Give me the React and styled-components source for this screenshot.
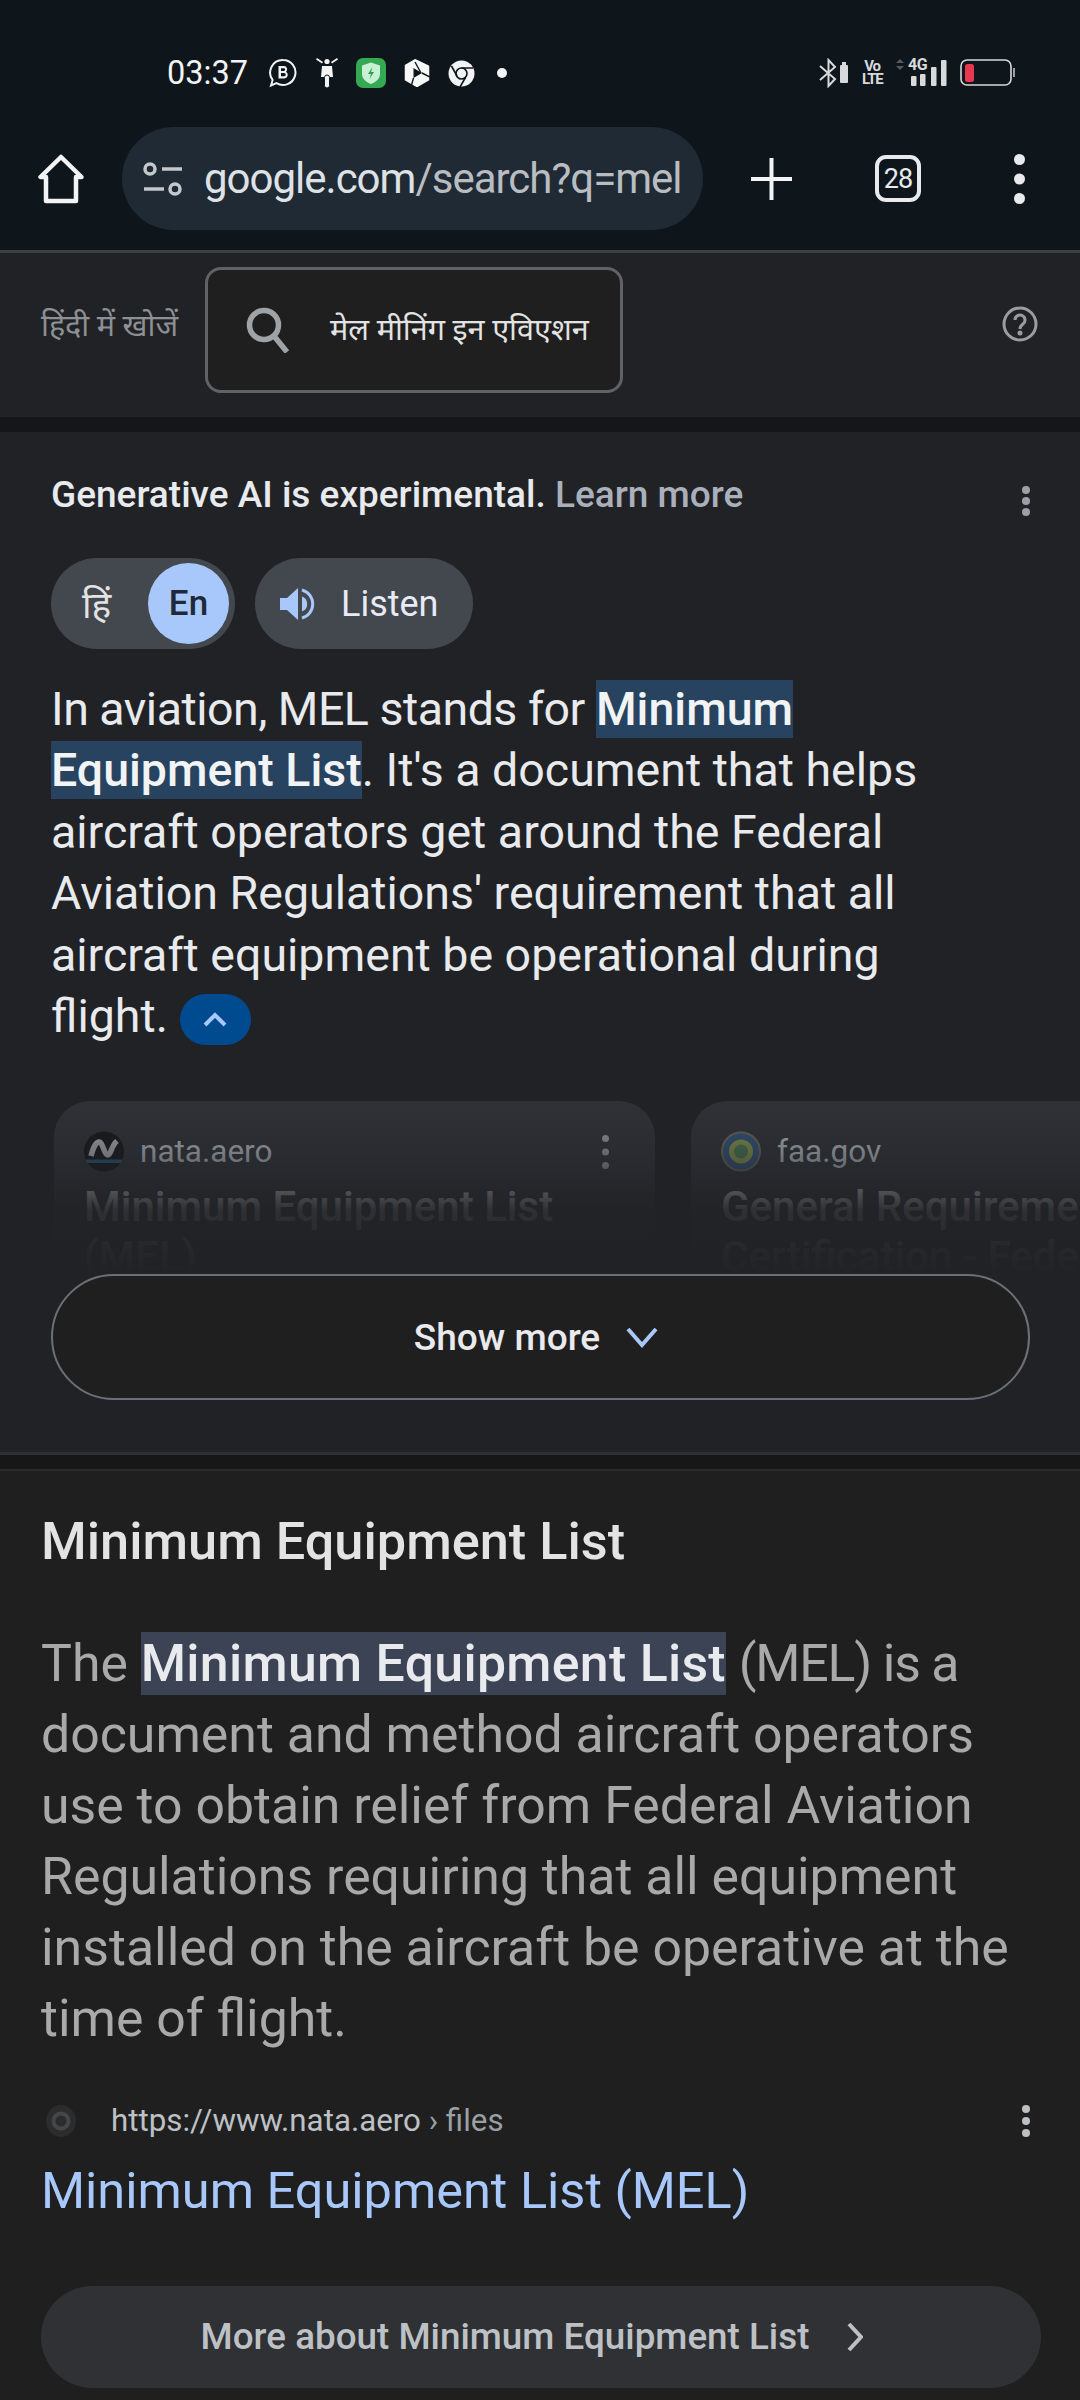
import React from "react";
import styled, { createGlobalStyle } from "styled-components";

const Global = createGlobalStyle`
  html, body { margin: 0; padding: 0; background: #1f1f1f; }
  * { box-sizing: border-box; }
`;
const SANS = `"Roboto", "Noto Sans", sans-serif`;

const Page = styled.div`
  width: 1080px; height: 2400px; overflow: hidden; background: #1f1f1f; font-family: ${SANS};
`;
const Header = styled.header`
  background: #0f161b; border-bottom: 3px solid #3c4043; height: 253px;
`;
const StatusBar = styled.div`
  height: 127px; padding: 46px 64px 0 167px; display: flex; align-items: flex-start; justify-content: space-between;
`;
const StatusGroup = styled.div`
  display: flex; align-items: center; height: 54px; gap: ${p => p.$gap || 0}px;
`;
const Clock = styled.span`
  color: #f1f3f4; font-size: 32.5px; width: 80px; margin-right: 3px; white-space: nowrap;
`;
const Toolbar = styled.div`
  height: 123px; padding: 0 0 20px 38px; display: flex; align-items: center;
`;
const UrlPill = styled.div`
  width: 581px; height: 103px; margin-left: 38px; border-radius: 52px; background: #1f2a35;
  display: flex; align-items: center; padding-left: 21px; overflow: hidden; flex: none;
`;
const UrlText = styled.span`
  color: #b9bdc2; font-size: 42px; letter-spacing: -1px; margin-left: 21px; white-space: nowrap;
  b { font-weight: 400; color: #dfe2e5; }
`;
const ToolButtons = styled.div`
  display: flex; align-items: center; margin-left: 48px;
`;
const TabCount = styled.div`
  width: 46px; height: 47px; margin: 0 92px 0 83px; border: 4.5px solid #e8eaed; border-radius: 11px; color: #e8eaed;
  font-size: 27px; display: flex; align-items: center; justify-content: center; letter-spacing: -1px;
`;

const HindiBar = styled.div`
  height: 164px; background: #202226; display: flex; align-items: flex-start; padding: 14px 42px 0 41px;
`;
const HindiLabel = styled.span`
  width: 164px; margin-top: 37px; color: #8d9094; font-size: 30.5px; line-height: 44px; white-space: nowrap;
`;
const SearchBox = styled.div`
  width: 418px; height: 126px; background: #1f1f1f; border: 3px solid #5f6368; border-radius: 16px;
  display: flex; align-items: center; padding-left: 38px; gap: 40px;
`;
const SearchText = styled.span`
  color: #e3e3e3; font-size: 30.6px; white-space: nowrap; margin-top: -5px;
`;
const HelpWrap = styled.div`
  margin: 39px 0 0 auto; height: 40px;
`;
const Gap = styled.div` height: 15px; background: #151617; `;

const Panel = styled.section`
  background: #202226; height: 1023px; padding: 38px 0 0 51px; border-bottom: 3px solid #2e3034;
`;
const Notice = styled.div`
  height: 48px; display: flex; align-items: center; padding-right: 49px; justify-content: space-between;
`;
const NoticeText = styled.span`
  color: #e8eaed; font-size: 37px; font-weight: 500; white-space: nowrap;
`;
const LearnMore = styled.span` color: #aab0bb; `;
const Dots = styled.svg`
  display: block; flex: none; margin-top: ${p => p.$shift || 0}px;
`;
const Controls = styled.div`
  display: flex; gap: 20px; margin-top: 40px; height: 91px;
`;
const Toggle = styled.div`
  width: 184px; height: 91px; border-radius: 46px; background: #43474e; display: flex; align-items: center; padding: 0 6px 0 31px; justify-content: space-between;
`;
const HiLabel = styled.span` color: #e3e3e3; font-size: 37px; `;
const EnKnob = styled.span`
  width: 81px; height: 81px; border-radius: 50%; background: #a8c7fa; color: #1f2a37; font-size: 35px; font-weight: 500;
  display: flex; align-items: center; justify-content: center;
`;
const ListenButton = styled.div`
  width: 218px; height: 91px; border-radius: 46px; background: #43474e; display: flex; align-items: center; padding-left: 25px; gap: 26px;
  color: #e8eaf6; font-size: 36px;
`;
const Summary = styled.p`
  margin: 30px 0 0; width: 900px; color: #e8eaed; font-size: 46.5px; line-height: 61.4px; height: 368px;
`;
const Tight = styled.span`
  letter-spacing: ${p => p.$by}px;
`;
const Mark = styled.mark`
  background: #28435f; color: #f1f3f4; font-weight: 500; padding: 2px 0;
`;
const CollapseChip = styled.span`
  display: inline-flex; width: 71px; height: 51px; border-radius: 26px; background: #004a8f; vertical-align: middle;
  align-items: center; justify-content: center; margin-left: 12px;
`;
const Rail = styled.div`
  position: relative; margin: 54px 0 0 3px; height: 173px; display: flex; gap: 36px; overflow: hidden;
`;
const Card = styled.article`
  flex: none; width: 601px; height: 240px; background: #303338; border-radius: 36px; padding: 30px 45px 0 30px;
`;
const CardHead = styled.div`
  display: flex; align-items: center; height: 41px; gap: 16px;
`;
const Domain = styled.span`
  color: #bdc1c6; font-size: 31.5px; flex: 1; margin-top: -1px;
`;
const CardTitle = styled.div`
  color: #e8eaed; font-size: 42px; font-weight: 500; line-height: 50px; margin-top: 10px; white-space: nowrap;
`;
const Fade = styled.div`
  position: absolute; inset: 0;
  background: linear-gradient(180deg, rgba(32,34,38,.1) 0%, rgba(32,34,38,.42) 29%, rgba(32,34,38,.93) 63%, rgba(32,34,38,1) 100%);
`;
const ShowMore = styled.div`
  width: 979px; height: 126px; border: 2px solid #6b7078; border-radius: 63px; background: #1f1f1f; padding-right: 9px;
  display: flex; align-items: center; justify-content: center; gap: 26px; color: #e8eaed; font-size: 37px; font-weight: 500;
`;
const Divider = styled.div`
  height: 16px; background: #171717; border-bottom: 2px solid #2a2b2d;
`;
const Result = styled.section`
  padding: 42px 49px 0 41px;
`;
const ResultHeading = styled.h2`
  margin: 0; color: #e3e3e3; font-size: 52.3px; font-weight: 500; line-height: 56px;
`;
const Snippet = styled.p`
  margin: 59px 0 0; color: #a9a9a9; font-size: 51.8px; line-height: 71.1px; width: 1000px;
`;
const SnippetMark = styled.mark`
  background: #3c4354; color: #e8eaed; font-weight: 500; padding: 1px 0; letter-spacing: .3px;
`;
const SourceRow = styled.div`
  display: flex; align-items: center; height: 40px; margin-top: 46px; padding-left: 5px;
`;
const SourceUrl = styled.span`
  margin-left: 35px; color: #bdc1c6; font-size: 31.3px; white-space: nowrap; flex: 1;
  i { font-style: normal; color: #9aa0a6; }
`;
const ResultLink = styled.div`
  color: #a8c7fa; font-size: 50.5px; line-height: 60px; margin-top: 20px;
`;
const MoreButton = styled.div`
  width: 1000px; height: 102px; margin-top: 65px; border-radius: 51px; background: #303134; padding-right: 18px;
  display: flex; align-items: center; justify-content: center; gap: 38px; color: #bdc1c6; font-size: 36.8px; font-weight: 500;
`;

const VDots = ({ h = 34, color = "#9aa0a6", r = 4.5, shift }) => (
  <Dots $shift={shift} width={r * 2 + 2} height={h} viewBox={`0 0 ${r * 2 + 2} ${h}`}>
    <circle cx={r + 1} cy={r} r={r} fill={color} />
    <circle cx={r + 1} cy={h / 2} r={r} fill={color} />
    <circle cx={r + 1} cy={h - r} r={r} fill={color} />
  </Dots>
);

const BIcon = () => (
  <svg width="30" height="30" viewBox="0 0 30 30" fill="none">
    <path d="M15 2a12.500 12.500 0 1 1-6.500 23.200L3 27.500l1.600-5.600A12.500 12.500 0 0 1 15 2z" stroke="#f1f3f4" strokeWidth="2" />
    <path d="M10.500 8h5.500a3.300 3.300 0 0 1 2 5.800 3.600 3.600 0 0 1-1.700 6.700h-5.800zM13 10.200v2.800h2.800a1.400 1.400 0 0 0 0-2.800zM13 15v3.300h3.100a1.650 1.650 0 0 0 0-3.300z" fill="#f1f3f4" fillRule="evenodd" />
  </svg>
);
const ScooterIcon = () => (
  <svg width="22" height="32" viewBox="0 0 22 32" fill="#f1f3f4">
    <path d="M1 1l6 4-1 1.500-6-4zM21 1l-6 4 1 1.500 6-4z" />
    <circle cx="11" cy="4.500" r="2.600" />
    <path d="M6 9h10l1 11h-12z" />
    <rect x="8.500" y="18" width="5" height="13" rx="2.500" stroke="#0f161b" strokeWidth="1" />
  </svg>
);
const ShieldApp = () => (
  <svg width="30" height="30" viewBox="0 0 30 30">
    <rect width="30" height="30" rx="7" fill="#34a853" />
    <path d="M15 4.500l9 3v8c0 5.500-4 8.500-9 10.500-5-2-9-5-9-10.500v-8z" fill="#c8f0d4" />
    <path d="M16.500 9l-4.500 7h3l-1.500 5 4.500-7h-3z" fill="#2f9e4f" />
  </svg>
);
const PlayHex = () => (
  <svg width="26" height="28" viewBox="0 0 26 28">
    <path d="M11 0.800L24.500 7.200V20.800L13 27.500 1.500 20.800V6.500z" fill="#f7f8f8" stroke="#f7f8f8" strokeLinejoin="round" strokeWidth="1.500" />
    <path d="M9.500 9l8.500 5-8.500 5z" fill="#0f161b" />
    <path d="M11 3L17 14M18 14L26 18M9.500 19L7 28" stroke="#0f161b" strokeWidth="1.400" />
  </svg>
);
const ChromeIcon = () => (
  <svg width="27" height="27" viewBox="0 0 27 27">
    <circle cx="13.500" cy="13.500" r="13" fill="#f1f3f4" />
    <circle cx="13.500" cy="13.500" r="5.500" fill="#f1f3f4" stroke="#0f161b" strokeWidth="1.600" />
    <path d="M13.500 8H25M9 16L3.500 6M17.500 17.500L12 27" stroke="#0f161b" strokeWidth="1.600" />
  </svg>
);
const DotWrap = styled.span` margin-left: 4px; display: flex; `;
const StatusDot = () => <DotWrap><svg width="10" height="10"><circle cx="5" cy="5" r="5" fill="#f1f3f4" /></svg></DotWrap>;

const BtBattery = () => (
  <svg width="30" height="30" viewBox="0 0 30 30" fill="none">
    <path d="M1 8l15 13-6.500 7V2L16 9 1 22" stroke="#d7d9db" strokeWidth="2" />
    <rect x="21" y="7" width="8" height="18" rx="1" fill="#d7d9db" />
    <rect x="23" y="4" width="4" height="3" fill="#d7d9db" />
  </svg>
);
const VoLte = styled.span`
  display: inline-block; width: 20px; color: #d7d9db; font-size: 15px; font-weight: 700; line-height: 13px; text-align: center; letter-spacing: -1.3px; word-spacing: 20px;
`;
const FourG = styled.span`
  position: absolute; left: 13px; top: -1px; color: #d7d9db; font-size: 16px; font-weight: 700; line-height: 16px; letter-spacing: -.5px;
`;
const SignalBox = styled.div` position: relative; width: 52px; height: 30px; `;
const Signal = () => (
  <SignalBox>
    <svg width="52" height="30" viewBox="0 0 52 30" fill="#d7d9db">
      <path d="M1 5l4-4 4 4zM1 8l4 4 4-4z" fill="#555a5f" />
      <rect x="16" y="18" width="5.500" height="10" rx="1" />
      <rect x="25" y="16" width="5.500" height="12" rx="1" />
      <rect x="36" y="9" width="5.500" height="19" rx="1" />
      <rect x="46" y="2" width="5.500" height="26" rx="1" />
    </svg>
    <FourG>4G</FourG>
  </SignalBox>
);
const Battery = () => (
  <svg width="56" height="28" viewBox="0 0 56 28" fill="none">
    <rect x="1" y="1" width="50" height="25" rx="6" stroke="#d7d9db" strokeWidth="1.600" />
    <rect x="5" y="5" width="9" height="18" rx="2.500" fill="#e8384f" />
    <rect x="53" y="9" width="2" height="9" fill="#9aa0a6" />
  </svg>
);

const Home = () => (
  <svg width="46" height="50" viewBox="0 0 46 50" fill="none" style={{ flex: "none" }}>
    <path d="M23 3L2.500 23H8V47H38V23H43.500z" stroke="#f1f3f4" strokeWidth="4.500" strokeLinejoin="round" />
  </svg>
);
const Tune = () => (
  <svg width="40" height="34" viewBox="0 0 40 34" fill="none" stroke="#c4c7cb" strokeWidth="3.500" style={{ flex: "none" }}>
    <circle cx="7" cy="7" r="5" />
    <path d="M19 7H39M1 27H21" />
    <circle cx="32" cy="27" r="5" />
  </svg>
);
const Plus = () => (
  <svg width="41" height="42" viewBox="0 0 41 42"><path d="M20.500 0V42M0 21H41" stroke="#f1f3f4" strokeWidth="4" /></svg>
);
const Search = () => (
  <svg width="44" height="46" viewBox="0 0 44 46" fill="none" stroke="#a0a3a6" strokeWidth="5.500">
    <circle cx="18" cy="18" r="14.500" />
    <path d="M28 29L41 45" />
  </svg>
);
const Help = () => (
  <svg width="36" height="36" viewBox="0 0 36 36" fill="none" stroke="#9a9da1" strokeWidth="3">
    <circle cx="18" cy="18" r="16" />
    <path d="M13 14a5 5 0 1 1 8 4c-2 1.500-3 2.500-3 5" />
    <circle cx="18" cy="27" r="1" fill="#9a9da1" />
  </svg>
);
const Speaker = () => (
  <svg width="35" height="34" viewBox="0 0 35 34">
    <path d="M0 11H7L18 1V33L7 23H0z" fill="#a8c7fa" />
    <path d="M22 9.500a8 8 0 0 1 0 15z" fill="#a8c7fa" />
    <path d="M22 3a14.500 14.500 0 0 1 0 28" fill="none" stroke="#a8c7fa" strokeWidth="3" />
  </svg>
);
const Chev = ({ d, w, h, color, sw = 4 }) => (
  <svg width={w} height={h} viewBox={`0 0 ${w} ${h}`} fill="none"><path d={d} stroke={color} strokeWidth={sw} /></svg>
);
const NataFav = () => (
  <svg width="40" height="41" viewBox="0 0 40 41">
    <circle cx="20" cy="20.500" r="20" fill="#15171a" />
    <path d="M1.500 28.500h37a20 20 0 0 1-1.500 3.500H3a20 20 0 0 1-1.500-3.500z" fill="#24567c" />
    <path d="M7 25c2-8 5-14 8-14 4 0 5 13 9 13 3 0 3-9 9-14" fill="none" stroke="#b4b6b8" strokeWidth="5.500" strokeLinejoin="round" />
  </svg>
);
const FaaFav = () => (
  <svg width="40" height="41" viewBox="0 0 40 41">
    <circle cx="20" cy="20.500" r="19" fill="#34557f" stroke="#6e6c5a" strokeWidth="2" />
    <circle cx="20" cy="20.500" r="12" fill="#8a9a4e" />
    <circle cx="20" cy="20.500" r="7" fill="#4c7a55" />
  </svg>
);
const ResultFav = () => (
  <svg width="30" height="32" viewBox="0 0 30 32" fill="none">
    <ellipse cx="15" cy="16" rx="15" ry="16" fill="#2c2c2d" />
    <circle cx="15" cy="16" r="7.500" stroke="#454648" strokeWidth="4" />
  </svg>
);

export default function App() {
  return (
    <Page>
      <Global />
      <Header>
        <StatusBar>
          <StatusGroup $gap={18}>
            <Clock>03:37</Clock>
            <BIcon /><ScooterIcon /><ShieldApp /><PlayHex /><ChromeIcon />
            <StatusDot />
          </StatusGroup>
          <StatusGroup $gap={13}>
            <BtBattery /><VoLte>Vo LTE</VoLte><Signal /><Battery />
          </StatusGroup>
        </StatusBar>
        <Toolbar>
          <Home />
          <UrlPill>
            <Tune />
            <UrlText><b>google.com</b>/search?q=mel</UrlText>
          </UrlPill>
          <ToolButtons>
            <Plus />
            <TabCount>28</TabCount>
            <VDots h={50} color="#e8eaed" r={5.5} />
          </ToolButtons>
        </Toolbar>
      </Header>
      <HindiBar>
        <HindiLabel>हिंदी में खोजें</HindiLabel>
        <SearchBox>
          <Search />
          <SearchText>मेल मीनिंग इन एविएशन</SearchText>
        </SearchBox>
        <HelpWrap><Help /></HelpWrap>
      </HindiBar>
      <Gap />
      <Panel>
        <Notice>
          <NoticeText>Generative AI is experimental. <LearnMore>Learn more</LearnMore></NoticeText>
          <VDots h={30} r={4} shift={14} />
        </Notice>
        <Controls>
          <Toggle><HiLabel>हिं</HiLabel><EnKnob>En</EnKnob></Toggle>
          <ListenButton><Speaker />Listen</ListenButton>
        </Controls>
        <Summary>
          <Tight $by={-0.5}>In aviation, MEL stands for </Tight><Mark>Minimum Equipment List</Mark>. It's a document that helps aircraft operators get around the Federal Aviation Regulations' requirement that all aircraft equipment be operational during flight.
          <CollapseChip><Chev d="M2 13L12 3L22 13" w={24} h={15} color="#a8c7fa" /></CollapseChip>
        </Summary>
        <Rail>
          <Card>
            <CardHead><NataFav /><Domain>nata.aero</Domain><VDots h={34} color="#9aa0a6" r={3.5} /></CardHead>
            <CardTitle>Minimum Equipment List<br />(MEL)</CardTitle>
          </Card>
          <Card>
            <CardHead><FaaFav /><Domain>faa.gov</Domain></CardHead>
            <CardTitle>General Requirements for<br />Certification - Federal</CardTitle>
          </Card>
          <Fade />
        </Rail>
        <ShowMore>Show more <Chev d="M2 3L16 19L30 3" w={32} h={22} color="#a8c7fa" /></ShowMore>
      </Panel>
      <Divider />
      <Result>
        <ResultHeading>Minimum Equipment List</ResultHeading>
        <Snippet>
          The <SnippetMark>Minimum Equipment List</SnippetMark> <Tight $by={-1.2}>(MEL) is a</Tight> document and method aircraft operators use to obtain relief from Federal Aviation Regulations requiring that all equipment installed on the aircraft be operative at the time of flight.
        </Snippet>
        <SourceRow>
          <ResultFav />
          <SourceUrl>https://www.nata.aero <i>› files</i></SourceUrl>
          <VDots h={32} color="#bdc1c6" r={4} />
        </SourceRow>
        <ResultLink>Minimum Equipment List (MEL)</ResultLink>
        <MoreButton>More about Minimum Equipment List <Chev d="M2 2L14 15L2 28" w={16} h={30} color="#bdc1c6" /></MoreButton>
      </Result>
    </Page>
  );
}
